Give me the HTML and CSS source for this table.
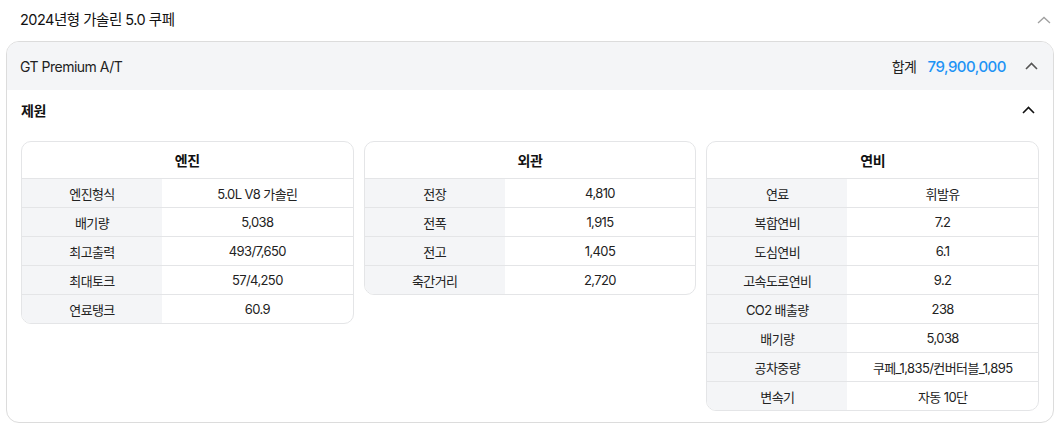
FILE: index.html
```html
<!DOCTYPE html>
<html lang="ko">
<head>
<meta charset="utf-8">
<link rel="stylesheet" href="styles.css">
</head>
<body>
<div class="page">
  <div class="top">
    <span class="top-title">2024년형 가솔린 5.0 쿠페</span>
    <svg class="chev chev-light" width="14" height="8" viewBox="0 0 14 8"><path d="M1 7L7 1.5L13 7" fill="none" stroke="currentColor" stroke-width="1.3"/></svg>
  </div>
  <div class="card">
    <div class="card-head">
      <span class="trim">GT Premium A/T</span>
      <div class="total">
        <span class="total-label">합계</span>
        <span class="total-price">79,900,000</span>
        <svg class="chev chev-mid" width="13" height="8" viewBox="0 0 13 8"><path d="M1 7L6.5 1.5L12 7" fill="none" stroke="currentColor" stroke-width="1.6"/></svg>
      </div>
    </div>
    <div class="spec">
      <div class="spec-head">
        <span class="spec-title">제원</span>
        <svg class="chev chev-dark" width="13" height="8" viewBox="0 0 13 8"><path d="M1 7L6.5 1.5L12 7" fill="none" stroke="currentColor" stroke-width="1.6"/></svg>
      </div>
      <div class="tables">
        <div class="tbl">
          <div class="tbl-head">엔진</div>
          <div class="row"><div class="k">엔진형식</div><div class="v">5.0L V8 가솔린</div></div>
          <div class="row"><div class="k">배기량</div><div class="v">5,038</div></div>
          <div class="row"><div class="k">최고출력</div><div class="v">493/7,650</div></div>
          <div class="row"><div class="k">최대토크</div><div class="v">57/4,250</div></div>
          <div class="row"><div class="k">연료탱크</div><div class="v">60.9</div></div>
        </div>
        <div class="tbl">
          <div class="tbl-head">외관</div>
          <div class="row"><div class="k">전장</div><div class="v">4,810</div></div>
          <div class="row"><div class="k">전폭</div><div class="v">1,915</div></div>
          <div class="row"><div class="k">전고</div><div class="v">1,405</div></div>
          <div class="row"><div class="k">축간거리</div><div class="v">2,720</div></div>
        </div>
        <div class="tbl">
          <div class="tbl-head">연비</div>
          <div class="row"><div class="k">연료</div><div class="v">휘발유</div></div>
          <div class="row"><div class="k">복합연비</div><div class="v">7.2</div></div>
          <div class="row"><div class="k">도심연비</div><div class="v">6.1</div></div>
          <div class="row"><div class="k">고속도로연비</div><div class="v">9.2</div></div>
          <div class="row"><div class="k">CO2 배출량</div><div class="v">238</div></div>
          <div class="row"><div class="k">배기량</div><div class="v">5,038</div></div>
          <div class="row"><div class="k">공차중량</div><div class="v">쿠페_1,835/컨버터블_1,895</div></div>
          <div class="row"><div class="k">변속기</div><div class="v">자동 10단</div></div>
        </div>
      </div>
    </div>
  </div>
</div>
</body>
</html>
```

FILE: styles.css
```css
* { box-sizing: border-box; }
html, body { margin: 0; padding: 0; background: #fff; }
body {
  font-family: Inter, "Noto Sans CJK KR", "Noto Sans", sans-serif;
  color: #111;
}
.page { width: 1058px; }
.top {
  height: 36px;
  display: flex;
  align-items: center;
  justify-content: space-between;
  padding: 0 7px 0 20px;
}
.top-title { font-size: 14.5px; color: #111; letter-spacing: -0.5px; }
.chev { display: block; }
.chev-light { color: #a0a0a0; margin-top: 3px; }
.chev-mid { color: #555; }
.chev-dark { color: #111; }
.card {
  margin: 5px 4px 0 6px;
  border: 1px solid #dcdcdc;
  border-radius: 13px;
  overflow: hidden;
}
.card-head {
  height: 48px;
  background: #f4f5f7;
  display: flex;
  align-items: center;
  justify-content: space-between;
  padding: 0 15px 0 13px;
}
.trim { font-size: 14px; color: #222; letter-spacing: -0.5px; }
.total { display: flex; align-items: center; }
.total-label { font-size: 14px; color: #222; margin-right: 11px; letter-spacing: -0.5px; }
.total-price { font-size: 15px; font-weight: 500; color: #1e93f5; margin-right: 19px; letter-spacing: -0.5px; }
.spec { padding: 0 14px 11px 14px; }
.spec-head {
  height: 40px;
  display: flex;
  align-items: center;
  justify-content: space-between;
  padding: 0 4px 0 0;
}
.spec-title { font-size: 14px; font-weight: 700; color: #111; letter-spacing: -0.4px; }
.tables {
  margin-top: 11px;
  display: grid;
  grid-template-columns: repeat(3, 1fr);
  gap: 10px;
  align-items: start;
}
.tbl {
  border: 1px solid #e4e5e7;
  border-radius: 10px;
  overflow: hidden;
}
.tbl-head {
  height: 36px;
  display: flex;
  align-items: center;
  justify-content: center;
  font-size: 14px;
  font-weight: 700;
  color: #111;
  letter-spacing: -0.4px;
}
.row {
  display: flex;
  height: 29px;
  border-top: 1px solid #e4e5e7;
  font-size: 13px;
  color: #222;
  letter-spacing: -0.6px;
}
.k {
  width: 140px;
  background: #f4f5f7;
  display: flex;
  align-items: center;
  justify-content: center;
}
.v {
  flex: 1;
  display: flex;
  align-items: center;
  justify-content: center;
}
```
